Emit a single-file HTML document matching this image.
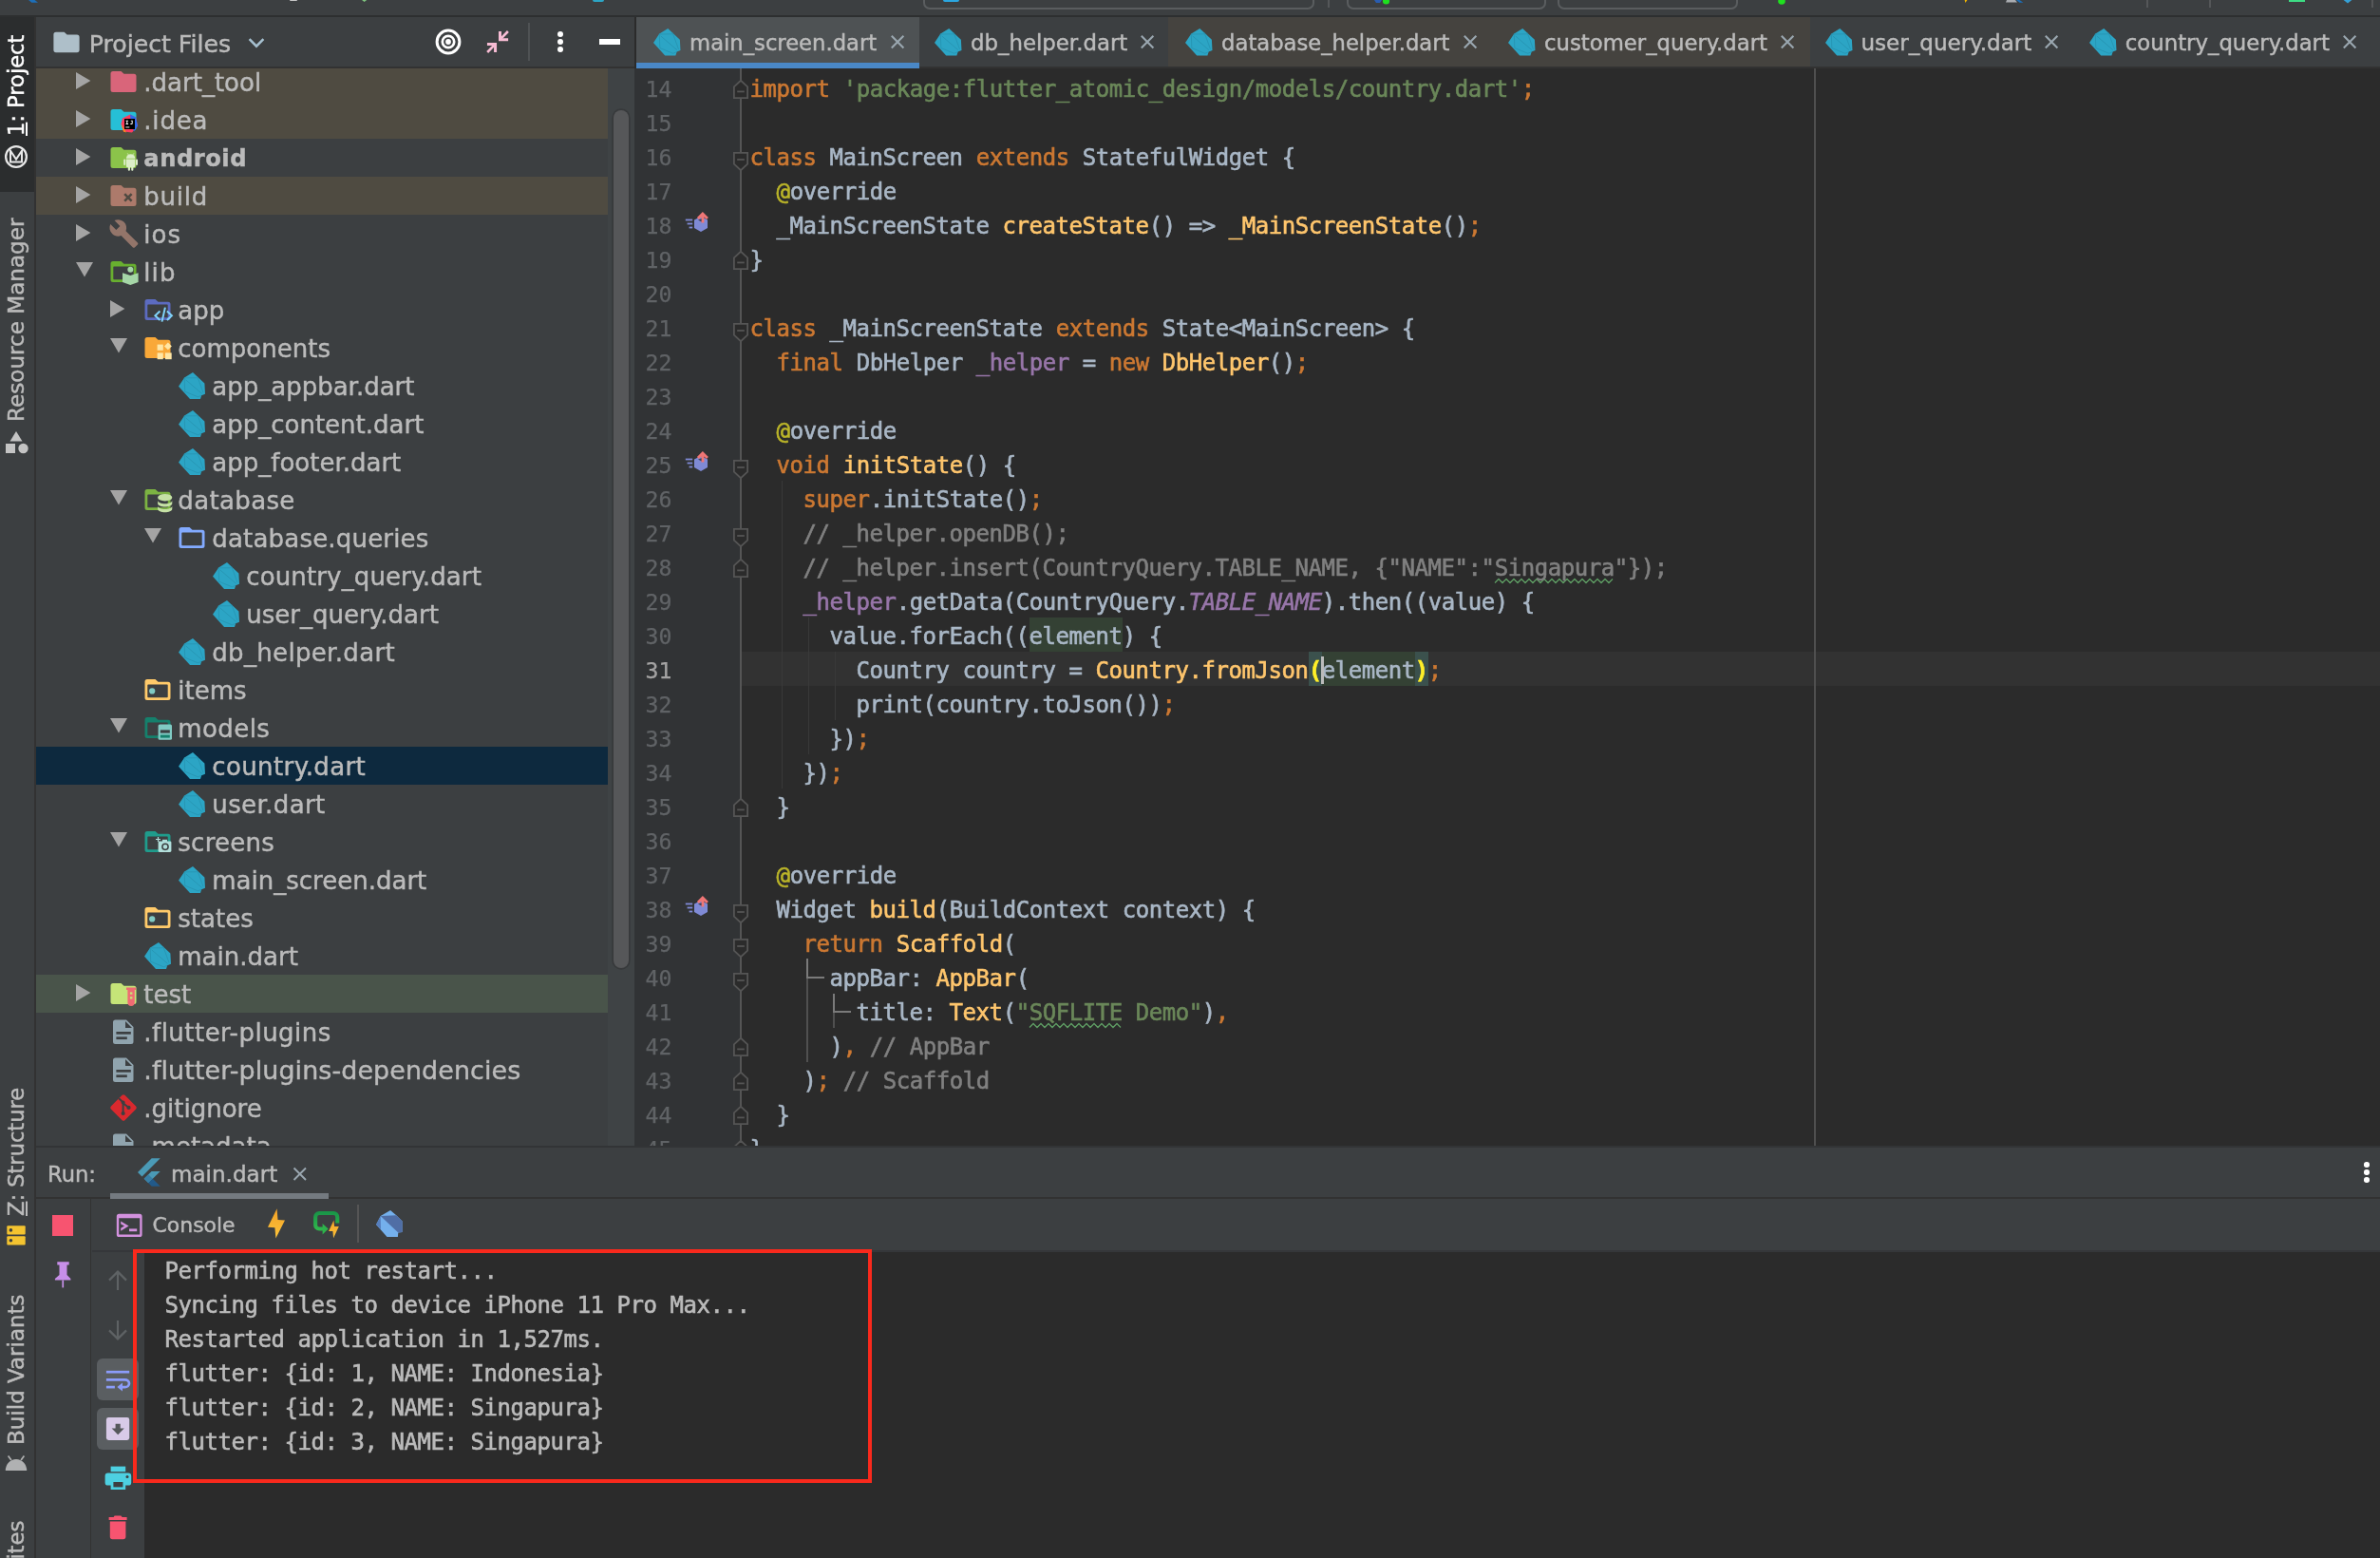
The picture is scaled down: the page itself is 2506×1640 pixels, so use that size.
<!DOCTYPE html><html><head><meta charset="utf-8"><title>main_screen.dart</title><style>
html,body{margin:0;padding:0;}
body{width:2506px;height:1640px;background:#3c3f41;position:relative;overflow:hidden;font-family:"DejaVu Sans","Liberation Sans",sans-serif;color:#bbb;-webkit-text-stroke:0.45px;}
.code,.con{-webkit-text-stroke:0.6px;}
.ln{-webkit-text-stroke:0.25px;}
div,svg,span.ab{position:absolute;box-sizing:border-box;}
.t{white-space:pre;font-size:26px;line-height:40px;height:40px;color:#bbbbbb;}
.code{white-space:pre;font-family:"DejaVu Sans Mono","Liberation Mono",monospace;font-size:24px;letter-spacing:-0.449px;line-height:36px;height:36px;color:#a9b7c6;}
.ln{font-family:"DejaVu Sans Mono","Liberation Mono",monospace;font-size:23.2px;letter-spacing:0.03px;line-height:36px;height:36px;color:#606366;white-space:pre;}
.k{color:#cc7832} .s{color:#6a8759} .f{color:#ffc66d} .a{color:#bbb529} .c{color:#808080} .p{color:#9876aa} .pi{color:#9876aa;font-style:italic}
.hl{background:#344134;padding:6.1px 0 2.1px} .br{background:#3b514d;color:#ffef28;font-weight:bold;padding:6.1px 0 2.1px}
.wv{}
.con{white-space:pre;font-family:"DejaVu Sans Mono","Liberation Mono",monospace;font-size:24px;letter-spacing:-0.449px;line-height:36px;height:36px;color:#bbbbbb;}
.tab{white-space:pre;font-size:22.6px;line-height:48px;height:48px;color:#bbbbbb;}
.vt{white-space:pre;font-size:22.8px;line-height:28px;height:28px;transform-origin:0 0;transform:rotate(-90deg);color:#bbbbbb;}
</style></head><body><div id="root" style="left:0;top:0;width:2506px;height:1640px;will-change:transform">
<div style="left:0px;top:0px;width:2506px;height:16px;background:#3c3f41"></div>
<div style="left:0px;top:16px;width:2506px;height:2px;background:#2d2f30"></div>
<div style="left:972px;top:-20px;width:412px;height:30px;border:2px solid #5a5d5f;border-radius:7px"></div>
<div style="left:1418px;top:-20px;width:210px;height:30px;border:2px solid #5a5d5f;border-radius:7px"></div>
<div style="left:1640px;top:-20px;width:190px;height:30px;border:2px solid #5a5d5f;border-radius:7px"></div>
<div style="left:1398px;top:0px;width:2px;height:8px;background:#555759"></div>
<div style="left:2260px;top:0px;width:2px;height:8px;background:#555759"></div>
<div style="left:2326px;top:0px;width:2px;height:8px;background:#555759"></div>
<div style="left:2496.5px;top:0px;width:2px;height:8px;background:#555759"></div>
<svg style="left:28px;top:0px;overflow:visible;" width="16" height="4" viewBox="0 0 16 4"><path d="M2,0 L5.4,2.8 L12,2.8 L8.6,0 Z" fill="#1d6fb8"/></svg>
<div style="left:305px;top:0px;width:8px;height:1.2px;background:#c8c8c8;border-radius:0 0 2px 2px"></div>
<svg style="left:379px;top:0px;overflow:visible;" width="10" height="4" viewBox="0 0 10 4"><path d="M2,0 L4.6,2 L7.2,0 Z" fill="#7fc47f"/></svg>
<div style="left:623.5px;top:0px;width:12px;height:1.8px;background:#2ca5c5;border-radius:0 0 2px 2px"></div>
<div style="left:993px;top:0px;width:17px;height:1.7px;background:#2ba6e0;border-radius:0 0 3px 3px"></div>
<svg style="left:1447px;top:0px;overflow:visible;" width="20" height="6" viewBox="0 0 20 6"><path d="M0,0 h8 l-2,3 h-4 z" fill="#2a5db0"/><circle cx="12.5" cy="1" r="3.6" fill="#1fe01f"/></svg>
<svg style="left:1869px;top:0px;overflow:visible;" width="12" height="6" viewBox="0 0 12 6"><circle cx="7" cy="1" r="3.8" fill="#1fe01f"/></svg>
<svg style="left:2066px;top:0px;overflow:visible;" width="10" height="4" viewBox="0 0 10 4"><path d="M2.6,0 L5.4,0 L3.4,3 Z" fill="#f0b400"/></svg>
<svg style="left:2110px;top:0px;overflow:visible;" width="24" height="5" viewBox="0 0 24 5"><path d="M3,0 h9 l2,2.6 h-12 z" fill="#a9acb0"/><path d="M13,0 h3.4 l4,2.8 h-4 z" fill="#1d6fb8"/></svg>
<div style="left:2410px;top:0px;width:17px;height:2.4px;background:#3ddc84"></div>
<svg style="left:2465px;top:0px;overflow:visible;" width="14" height="5" viewBox="0 0 14 5"><path d="M2.6,0 L7,3.4 L11.4,0 Z" fill="#35a0d6"/></svg>
<div style="left:0px;top:18px;width:36px;height:1622px;background:#3c3f41"></div>
<div style="left:36px;top:18px;width:2px;height:1622px;background:#323232"></div>
<div style="left:0px;top:18px;width:36px;height:184px;background:#2b2d2e"></div>
<div class="vt" style="left:2.5px;top:143.2px;color:#ffffff;font-size:22.55px"><span style="text-decoration:underline;text-underline-offset:1.5px">1</span>: Project</div>
<div class="vt" style="left:2.5px;top:443.5px;color:#bbbbbb;font-size:23.1px">Resource Manager</div>
<div class="vt" style="left:2.5px;top:1279.6px;color:#bbbbbb;font-size:22.55px"><span style="text-decoration:underline;text-underline-offset:1.5px">Z</span>: Structure</div>
<div class="vt" style="left:2.5px;top:1520.6px;color:#bbbbbb;font-size:23.0px">Build Variants</div>
<div class="vt" style="left:2.5px;top:1733px;color:#bbbbbb;font-size:22.8px">2: Favorites</div>
<svg style="left:4px;top:152px;overflow:visible;" width="26" height="26" viewBox="0 0 26 26"><circle cx="13" cy="13" r="10.9" fill="none" stroke="#e8e8e8" stroke-width="2.3"/><path d="M7,18.2 V6.8 L13,15.6 L19,6.8 V18.2 M6,18.6 H20" fill="none" stroke="#e8e8e8" stroke-width="2"/></svg>
<svg style="left:5px;top:453px;overflow:visible;" width="26" height="25" viewBox="0 0 26 25"><path d="M12,1 L18.5,11.5 H5.5 Z" fill="#c4c4c4"/><rect x="1" y="14" width="10" height="10" fill="#c4c4c4"/><circle cx="19.5" cy="19" r="5.2" fill="#c4c4c4"/></svg>
<svg style="left:7px;top:1289.6px;overflow:visible;" width="20" height="21" viewBox="0 0 20 21"><rect x="0.3" y="0.3" width="19.4" height="9.2" rx="1" fill="#f4c430"/><rect x="0.3" y="11.2" width="19.4" height="9.2" rx="1" fill="#f4c430"/><circle cx="4.4" cy="4.9" r="1.8" fill="#3c3f41"/><circle cx="4.4" cy="15.8" r="1.8" fill="#3c3f41"/></svg>
<svg style="left:4px;top:1530px;overflow:visible;" width="26" height="20" viewBox="0 0 26 20"><path d="M1.8,18 a11.2,12 0 0 1 22.4,0 z" fill="#b0b1b2"/><path d="M7.9,7 L4.6,2.4 M18.1,7 L21.4,2.4" stroke="#b0b1b2" stroke-width="1.7"/></svg>
<div style="left:38px;top:18px;width:630px;height:52px;background:#3c3f41"></div>
<div style="left:38px;top:70px;width:630px;height:2px;background:#323232"></div>
<svg style="left:56px;top:33px;overflow:visible;" width="29" height="23" viewBox="0 0 29 23"><path fill="#aebfc9" d="M3,0.8 h8.6 l3,2.8 h10.4 a2.6,2.6 0 0 1 2.6,2.6 v13.4 a2.6,2.6 0 0 1 -2.6,2.6 h-22 a2.6,2.6 0 0 1 -2.6,-2.6 v-16.2 a2.6,2.6 0 0 1 2.6,-2.6 z"/></svg>
<div class="t" style="left:93.7px;top:25px;font-size:25.2px;line-height:44px;height:44px">Project Files</div>
<svg style="left:260px;top:38px;overflow:visible;" width="20" height="14" viewBox="0 0 20 14"><path d="M2.6,3.2 L10,10.6 L17.4,3.2" fill="none" stroke="#a6c0d0" stroke-width="2.6"/></svg>
<svg style="left:457px;top:29px;overflow:visible;" width="30" height="30" viewBox="0 0 30 30"><circle cx="15" cy="15" r="11.9" fill="none" stroke="#fff" stroke-width="3"/><circle cx="15" cy="15" r="6.2" fill="none" stroke="#fff" stroke-width="2.7"/><circle cx="15" cy="15" r="2.9" fill="#fff"/></svg>
<svg style="left:510px;top:31px;overflow:visible;" width="28" height="28" viewBox="0 0 28 28"><g fill="none" stroke="#f7bcd4" stroke-width="3"><path d="M16.5,1.9 V10.65 H25.1"/><path d="M2.95,15.5 H11.55 V24"/></g><g fill="none" stroke="#f7bcd4" stroke-width="2.6"><path d="M24.9,2 L16.8,10.4"/><path d="M11.3,15.7 L3.2,24"/></g></svg>
<div style="left:556px;top:24px;width:2px;height:40px;background:#4f5254"></div>
<div style="left:586.6px;top:32.75px;width:6.3px;height:6.3px;background:#fff;border-radius:50%"></div>
<div style="left:586.6px;top:40.9px;width:6.3px;height:6.3px;background:#fff;border-radius:50%"></div>
<div style="left:586.6px;top:49.1px;width:6.3px;height:6.3px;background:#fff;border-radius:50%"></div>
<div style="left:631px;top:41px;width:22px;height:6px;background:#fff"></div>
<div style="left:38px;top:72px;width:630px;height:1134px;overflow:hidden">
<div style="left:0px;top:-6px;width:602px;height:40px;background:#4f4b41"></div>
<svg style="left:42px;top:4px;overflow:visible;" width="17" height="18" viewBox="0 0 17 18"><polygon points="0,0 15.4,9 0,18" fill="#a4a4a4"/></svg>
<svg style="left:78px;top:0px;overflow:visible;" width="30" height="29" viewBox="0 0 30 29"><path fill="#d9657a" d="M3,3 h8.5 l3,2.8 h10.5 a2.5,2.5 0 0 1 2.5,2.5 v14.2 a2.5,2.5 0 0 1 -2.5,2.5 h-22 a2.5,2.5 0 0 1 -2.5,-2.5 v-17 a2.5,2.5 0 0 1 2.5,-2.5 z"/></svg>
<div class="t" style="left:113.30000000000001px;top:-4.6px;">.dart_tool</div>
<div style="left:0px;top:34px;width:602px;height:40px;background:#4f4b41"></div>
<svg style="left:42px;top:44px;overflow:visible;" width="17" height="18" viewBox="0 0 17 18"><polygon points="0,0 15.4,9 0,18" fill="#a4a4a4"/></svg>
<svg style="left:78px;top:40px;overflow:visible;" width="30" height="29" viewBox="0 0 30 29"><path fill="#26bfd6" d="M3,3 h8.5 l3,2.8 h10.5 a2.5,2.5 0 0 1 2.5,2.5 v14.2 a2.5,2.5 0 0 1 -2.5,2.5 h-22 a2.5,2.5 0 0 1 -2.5,-2.5 v-17 a2.5,2.5 0 0 1 2.5,-2.5 z"/><g transform="translate(1,0.5)"><path d="M12,12 L20,8 L26,11 L28,20 L22,27 L13,26 L10.5,18 Z" fill="#fc3c5f"/><path d="M20,8 L26,11 L28,20 L24,26 L21,18 Z" fill="#2f6bf0"/><path d="M10.5,18 L13,26 L16,27 L12,20 Z" fill="#f78c1f"/><rect x="14" y="12.5" width="11" height="11" fill="#000"/><rect x="15.3" y="21" width="4" height="0.9" fill="#fff"/><path d="M15.5,14.2 h2.6 v0.8 h-0.8 v2.6 h0.8 v0.8 h-2.6 v-0.8 h0.8 v-2.6 h-0.8 z M20.8,14.2 h1.9 v3 c0,1 -0.6,1.3 -1.4,1.3 c-0.7,0 -1.1,-0.3 -1.4,-0.7 l0.6,-0.6 c0.2,0.3 0.4,0.4 0.7,0.4 c0.3,0 0.5,-0.2 0.5,-0.6 v-2 h-0.9 z" fill="#fff"/></g></svg>
<div class="t" style="left:113.30000000000001px;top:35.4px;letter-spacing:0.800px;">.idea</div>
<svg style="left:42px;top:84px;overflow:visible;" width="17" height="18" viewBox="0 0 17 18"><polygon points="0,0 15.4,9 0,18" fill="#a4a4a4"/></svg>
<svg style="left:78px;top:80px;overflow:visible;" width="30" height="29" viewBox="0 0 30 29"><path fill="#8bc34a" d="M3,3 h8.5 l3,2.8 h10.5 a2.5,2.5 0 0 1 2.5,2.5 v14.2 a2.5,2.5 0 0 1 -2.5,2.5 h-22 a2.5,2.5 0 0 1 -2.5,-2.5 v-17 a2.5,2.5 0 0 1 2.5,-2.5 z"/><g fill="#dcedc8" transform="translate(1.6,0)"><path d="M15.3,15.5 h9.4 v7.6 a1,1 0 0 1 -1,1 h-0.9 v2.6 a1.1,1.1 0 0 1 -2.2,0 v-2.6 h-1.2 v2.6 a1.1,1.1 0 0 1 -2.2,0 v-2.6 h-0.9 a1,1 0 0 1 -1,-1 z"/><path d="M15.3,14.7 a4.7,4.4 0 0 1 9.4,0 z"/><rect x="12.6" y="15.5" width="2" height="6.6" rx="1"/><rect x="25.4" y="15.5" width="2" height="6.6" rx="1"/><path d="M16.6,9.3 l1.2,1.8 M23.4,9.3 l-1.2,1.8" stroke="#dcedc8" stroke-width="0.7"/></g></svg>
<div class="t" style="left:113.30000000000001px;top:75.4px;font-weight:bold;font-size:24.2px;letter-spacing:0.533px;">android</div>
<div style="left:0px;top:114px;width:602px;height:40px;background:#4f4b41"></div>
<svg style="left:42px;top:124px;overflow:visible;" width="17" height="18" viewBox="0 0 17 18"><polygon points="0,0 15.4,9 0,18" fill="#a4a4a4"/></svg>
<svg style="left:78px;top:120px;overflow:visible;" width="30" height="29" viewBox="0 0 30 29"><path fill="#ad7a6b" d="M3,3 h8.5 l3,2.8 h10.5 a2.5,2.5 0 0 1 2.5,2.5 v14.2 a2.5,2.5 0 0 1 -2.5,2.5 h-22 a2.5,2.5 0 0 1 -2.5,-2.5 v-17 a2.5,2.5 0 0 1 2.5,-2.5 z"/><path d="M15.2,12.2 L22.6,19.6 M22.6,12.2 L15.2,19.6" stroke="#4f4a41" stroke-width="2.6" fill="none"/></svg>
<div class="t" style="left:113.30000000000001px;top:115.4px;letter-spacing:0.775px;">build</div>
<svg style="left:42px;top:164px;overflow:visible;" width="17" height="18" viewBox="0 0 17 18"><polygon points="0,0 15.4,9 0,18" fill="#a4a4a4"/></svg>
<svg style="left:78px;top:160px;overflow:visible;" width="30" height="29" viewBox="0 0 30 29"><g fill="#93756a" transform="translate(0.4,-1.1) scale(1.06)"><path d="M26.9,23.3 L15.2,11.6 C16.4,8.6 15.8,5.1 13.4,2.7 C10.8,0.1 7,-0.4 3.9,1 L9.4,6.6 L5.6,10.4 L-0.1,4.9 C-1.6,8 -1,11.8 1.6,14.3 C4,16.7 7.5,17.3 10.5,16.2 L22.2,27.9 C22.7,28.4 23.5,28.4 24,27.9 L26.9,25 C27.5,24.6 27.5,23.7 26.9,23.3 Z"/></g></svg>
<div class="t" style="left:113.30000000000001px;top:155.4px;letter-spacing:1.050px;">ios</div>
<svg style="left:42px;top:204px;overflow:visible;" width="18" height="16" viewBox="0 0 18 16"><polygon points="0,0 18,0 9,15.6" fill="#a4a4a4"/></svg>
<svg style="left:78px;top:200px;overflow:visible;" width="30" height="29" viewBox="0 0 30 29"><path fill-rule="evenodd" fill="#68af2f" d="M3,3 h8.5 l3,2.8 h10.5 a2.5,2.5 0 0 1 2.5,2.5 v14.2 a2.5,2.5 0 0 1 -2.5,2.5 h-22 a2.5,2.5 0 0 1 -2.5,-2.5 v-17 a2.5,2.5 0 0 1 2.5,-2.5 z M4,8.6 h20 a0.7,0.7 0 0 1 0.7,0.7 v12.2 a0.7,0.7 0 0 1 -0.7,0.7 h-20 a0.7,0.7 0 0 1 -0.7,-0.7 v-12.2 a0.7,0.7 0 0 1 0.7,-0.7 z"/><g><circle cx="21.3" cy="11.8" r="3" fill="#a5d6a7"/><path d="M13,15.2 L21.3,17.9 L29.6,15.2 V25 L21.3,28 L13,25 Z" fill="#a5d6a7"/></g></svg>
<div class="t" style="left:113.30000000000001px;top:195.4px;letter-spacing:1.100px;">lib</div>
<svg style="left:78px;top:244px;overflow:visible;" width="17" height="18" viewBox="0 0 17 18"><polygon points="0,0 15.4,9 0,18" fill="#a4a4a4"/></svg>
<svg style="left:114px;top:240px;overflow:visible;" width="30" height="29" viewBox="0 0 30 29"><path fill-rule="evenodd" fill="#5c6bc0" d="M3,3 h8.5 l3,2.8 h10.5 a2.5,2.5 0 0 1 2.5,2.5 v14.2 a2.5,2.5 0 0 1 -2.5,2.5 h-22 a2.5,2.5 0 0 1 -2.5,-2.5 v-17 a2.5,2.5 0 0 1 2.5,-2.5 z M4,8.6 h20 a0.7,0.7 0 0 1 0.7,0.7 v12.2 a0.7,0.7 0 0 1 -0.7,0.7 h-20 a0.7,0.7 0 0 1 -0.7,-0.7 v-12.2 a0.7,0.7 0 0 1 0.7,-0.7 z"/><g fill="none" stroke="#81d4fa" stroke-width="2"><path d="M16.4,15.6 L11.4,20.3 L16.4,25"/><path d="M23.9,15.6 L28.9,20.3 L23.9,25"/><path d="M21.9,11.6 L18.5,26.6"/></g></svg>
<div class="t" style="left:149.3px;top:235.4px;">app</div>
<svg style="left:78px;top:284px;overflow:visible;" width="18" height="16" viewBox="0 0 18 16"><polygon points="0,0 18,0 9,15.6" fill="#a4a4a4"/></svg>
<svg style="left:114px;top:280px;overflow:visible;" width="30" height="29" viewBox="0 0 30 29"><path fill="#f9a838" d="M3,3 h8.5 l3,2.8 h10.5 a2.5,2.5 0 0 1 2.5,2.5 v14.2 a2.5,2.5 0 0 1 -2.5,2.5 h-22 a2.5,2.5 0 0 1 -2.5,-2.5 v-17 a2.5,2.5 0 0 1 2.5,-2.5 z"/><g fill="#ffe6a5" transform="translate(0.6,2)"><rect x="13" y="8.6" width="6.2" height="6.2"/><rect x="13" y="17.4" width="6.2" height="6.8"/><rect x="21.3" y="17.4" width="6.8" height="6.8"/><rect x="21.5" y="7.6" width="5.6" height="5.6" transform="rotate(45 24.3 10.4)"/></g></svg>
<div class="t" style="left:149.3px;top:275.4px;">components</div>
<svg style="left:150px;top:320px;overflow:visible;" width="30" height="29" viewBox="0 0 30 29"><polygon fill="#2ca5c5" points="15,0 27.4,11.5 28,22.7 24.2,24.2 23,28 12,28 0,14.8 6.2,5.5"/><path fill="none" stroke="#2590ad" stroke-width="0.7" d="M6.2,5.5 L6.7,20.2 L20.4,25.8 L24.2,24.2 M7.6,7.8 L24.5,22.3 M19.6,4.2 L22,10.2 L26,21.3 M6.2,5.9 L19.6,5.7"/></svg>
<div class="t" style="left:185.3px;top:315.4px;">app_appbar.dart</div>
<svg style="left:150px;top:360px;overflow:visible;" width="30" height="29" viewBox="0 0 30 29"><polygon fill="#2ca5c5" points="15,0 27.4,11.5 28,22.7 24.2,24.2 23,28 12,28 0,14.8 6.2,5.5"/><path fill="none" stroke="#2590ad" stroke-width="0.7" d="M6.2,5.5 L6.7,20.2 L20.4,25.8 L24.2,24.2 M7.6,7.8 L24.5,22.3 M19.6,4.2 L22,10.2 L26,21.3 M6.2,5.9 L19.6,5.7"/></svg>
<div class="t" style="left:185.3px;top:355.4px;">app_content.dart</div>
<svg style="left:150px;top:400px;overflow:visible;" width="30" height="29" viewBox="0 0 30 29"><polygon fill="#2ca5c5" points="15,0 27.4,11.5 28,22.7 24.2,24.2 23,28 12,28 0,14.8 6.2,5.5"/><path fill="none" stroke="#2590ad" stroke-width="0.7" d="M6.2,5.5 L6.7,20.2 L20.4,25.8 L24.2,24.2 M7.6,7.8 L24.5,22.3 M19.6,4.2 L22,10.2 L26,21.3 M6.2,5.9 L19.6,5.7"/></svg>
<div class="t" style="left:185.3px;top:395.4px;">app_footer.dart</div>
<svg style="left:78px;top:444px;overflow:visible;" width="18" height="16" viewBox="0 0 18 16"><polygon points="0,0 18,0 9,15.6" fill="#a4a4a4"/></svg>
<svg style="left:114px;top:440px;overflow:visible;" width="30" height="29" viewBox="0 0 30 29"><path fill-rule="evenodd" fill="#7cb342" d="M3,3 h8.5 l3,2.8 h10.5 a2.5,2.5 0 0 1 2.5,2.5 v14.2 a2.5,2.5 0 0 1 -2.5,2.5 h-22 a2.5,2.5 0 0 1 -2.5,-2.5 v-17 a2.5,2.5 0 0 1 2.5,-2.5 z M4,8.6 h20 a0.7,0.7 0 0 1 0.7,0.7 v12.2 a0.7,0.7 0 0 1 -0.7,0.7 h-20 a0.7,0.7 0 0 1 -0.7,-0.7 v-12.2 a0.7,0.7 0 0 1 0.7,-0.7 z"/><g fill="#c5e1a5" transform="translate(0.7,0.2)"><ellipse cx="21" cy="11.5" rx="7.6" ry="3.7"/><path d="M13.4,14.3 c0,5 15.2,5 15.2,0 v3.2 c0,5 -15.2,5 -15.2,0 z"/><path d="M13.4,20 c0,5 15.2,5 15.2,0 v3.2 c0,5 -15.2,5 -15.2,0 z"/></g></svg>
<div class="t" style="left:149.3px;top:435.4px;letter-spacing:0.357px;">database</div>
<svg style="left:114px;top:484px;overflow:visible;" width="18" height="16" viewBox="0 0 18 16"><polygon points="0,0 18,0 9,15.6" fill="#a4a4a4"/></svg>
<svg style="left:150px;top:480px;overflow:visible;" width="30" height="29" viewBox="0 0 30 29"><path fill-rule="evenodd" fill="#82aaff" d="M3,3 h8.5 l3,2.8 h10.5 a2.5,2.5 0 0 1 2.5,2.5 v14.2 a2.5,2.5 0 0 1 -2.5,2.5 h-22 a2.5,2.5 0 0 1 -2.5,-2.5 v-17 a2.5,2.5 0 0 1 2.5,-2.5 z M4,8.6 h20 a0.7,0.7 0 0 1 0.7,0.7 v12.2 a0.7,0.7 0 0 1 -0.7,0.7 h-20 a0.7,0.7 0 0 1 -0.7,-0.7 v-12.2 a0.7,0.7 0 0 1 0.7,-0.7 z"/></svg>
<div class="t" style="left:185.3px;top:475.4px;letter-spacing:0.187px;">database.queries</div>
<svg style="left:186px;top:520px;overflow:visible;" width="30" height="29" viewBox="0 0 30 29"><polygon fill="#2ca5c5" points="15,0 27.4,11.5 28,22.7 24.2,24.2 23,28 12,28 0,14.8 6.2,5.5"/><path fill="none" stroke="#2590ad" stroke-width="0.7" d="M6.2,5.5 L6.7,20.2 L20.4,25.8 L24.2,24.2 M7.6,7.8 L24.5,22.3 M19.6,4.2 L22,10.2 L26,21.3 M6.2,5.9 L19.6,5.7"/></svg>
<div class="t" style="left:221.3px;top:515.4px;letter-spacing:0.129px;">country_query.dart</div>
<svg style="left:186px;top:560px;overflow:visible;" width="30" height="29" viewBox="0 0 30 29"><polygon fill="#2ca5c5" points="15,0 27.4,11.5 28,22.7 24.2,24.2 23,28 12,28 0,14.8 6.2,5.5"/><path fill="none" stroke="#2590ad" stroke-width="0.7" d="M6.2,5.5 L6.7,20.2 L20.4,25.8 L24.2,24.2 M7.6,7.8 L24.5,22.3 M19.6,4.2 L22,10.2 L26,21.3 M6.2,5.9 L19.6,5.7"/></svg>
<div class="t" style="left:221.3px;top:555.4px;">user_query.dart</div>
<svg style="left:150px;top:600px;overflow:visible;" width="30" height="29" viewBox="0 0 30 29"><polygon fill="#2ca5c5" points="15,0 27.4,11.5 28,22.7 24.2,24.2 23,28 12,28 0,14.8 6.2,5.5"/><path fill="none" stroke="#2590ad" stroke-width="0.7" d="M6.2,5.5 L6.7,20.2 L20.4,25.8 L24.2,24.2 M7.6,7.8 L24.5,22.3 M19.6,4.2 L22,10.2 L26,21.3 M6.2,5.9 L19.6,5.7"/></svg>
<div class="t" style="left:185.3px;top:595.4px;letter-spacing:0.323px;">db_helper.dart</div>
<svg style="left:114px;top:640px;overflow:visible;" width="30" height="29" viewBox="0 0 30 29"><path fill-rule="evenodd" fill="#ffca6a" d="M3,3 h8.5 l3,2.8 h10.5 a2.5,2.5 0 0 1 2.5,2.5 v14.2 a2.5,2.5 0 0 1 -2.5,2.5 h-22 a2.5,2.5 0 0 1 -2.5,-2.5 v-17 a2.5,2.5 0 0 1 2.5,-2.5 z M4,8.6 h20 a0.7,0.7 0 0 1 0.7,0.7 v12.2 a0.7,0.7 0 0 1 -0.7,0.7 h-20 a0.7,0.7 0 0 1 -0.7,-0.7 v-12.2 a0.7,0.7 0 0 1 0.7,-0.7 z"/><circle cx="8.2" cy="15.4" r="3.1" fill="#80cbc4"/></svg>
<div class="t" style="left:149.3px;top:635.4px;">items</div>
<svg style="left:78px;top:684px;overflow:visible;" width="18" height="16" viewBox="0 0 18 16"><polygon points="0,0 18,0 9,15.6" fill="#a4a4a4"/></svg>
<svg style="left:114px;top:680px;overflow:visible;" width="30" height="29" viewBox="0 0 30 29"><path fill-rule="evenodd" fill="#15806c" d="M3,3 h8.5 l3,2.8 h10.5 a2.5,2.5 0 0 1 2.5,2.5 v14.2 a2.5,2.5 0 0 1 -2.5,2.5 h-22 a2.5,2.5 0 0 1 -2.5,-2.5 v-17 a2.5,2.5 0 0 1 2.5,-2.5 z M4,8.6 h20 a0.7,0.7 0 0 1 0.7,0.7 v12.2 a0.7,0.7 0 0 1 -0.7,0.7 h-20 a0.7,0.7 0 0 1 -0.7,-0.7 v-12.2 a0.7,0.7 0 0 1 0.7,-0.7 z"/><g><rect x="14.6" y="10.4" width="14.4" height="16.4" rx="1.6" fill="#80cbc4"/><rect x="16.8" y="16.4" width="10" height="3.2" fill="#3c3f41"/><rect x="16.8" y="21.6" width="10" height="3" fill="#15806c"/></g></svg>
<div class="t" style="left:149.3px;top:675.4px;letter-spacing:0.400px;">models</div>
<div style="left:0px;top:714px;width:602px;height:40px;background:#0d293e"></div>
<svg style="left:150px;top:720px;overflow:visible;" width="30" height="29" viewBox="0 0 30 29"><polygon fill="#2ca5c5" points="15,0 27.4,11.5 28,22.7 24.2,24.2 23,28 12,28 0,14.8 6.2,5.5"/><path fill="none" stroke="#2590ad" stroke-width="0.7" d="M6.2,5.5 L6.7,20.2 L20.4,25.8 L24.2,24.2 M7.6,7.8 L24.5,22.3 M19.6,4.2 L22,10.2 L26,21.3 M6.2,5.9 L19.6,5.7"/></svg>
<div class="t" style="left:185.3px;top:715.4px;letter-spacing:0.382px;">country.dart</div>
<svg style="left:150px;top:760px;overflow:visible;" width="30" height="29" viewBox="0 0 30 29"><polygon fill="#2ca5c5" points="15,0 27.4,11.5 28,22.7 24.2,24.2 23,28 12,28 0,14.8 6.2,5.5"/><path fill="none" stroke="#2590ad" stroke-width="0.7" d="M6.2,5.5 L6.7,20.2 L20.4,25.8 L24.2,24.2 M7.6,7.8 L24.5,22.3 M19.6,4.2 L22,10.2 L26,21.3 M6.2,5.9 L19.6,5.7"/></svg>
<div class="t" style="left:185.3px;top:755.4px;letter-spacing:0.375px;">user.dart</div>
<svg style="left:78px;top:804px;overflow:visible;" width="18" height="16" viewBox="0 0 18 16"><polygon points="0,0 18,0 9,15.6" fill="#a4a4a4"/></svg>
<svg style="left:114px;top:800px;overflow:visible;" width="30" height="29" viewBox="0 0 30 29"><path fill-rule="evenodd" fill="#1f9c8c" d="M3,3 h8.5 l3,2.8 h10.5 a2.5,2.5 0 0 1 2.5,2.5 v14.2 a2.5,2.5 0 0 1 -2.5,2.5 h-22 a2.5,2.5 0 0 1 -2.5,-2.5 v-17 a2.5,2.5 0 0 1 2.5,-2.5 z M4,8.6 h20 a0.7,0.7 0 0 1 0.7,0.7 v12.2 a0.7,0.7 0 0 1 -0.7,0.7 h-20 a0.7,0.7 0 0 1 -0.7,-0.7 v-12.2 a0.7,0.7 0 0 1 0.7,-0.7 z"/><g><rect x="14.6" y="13.4" width="13.8" height="11.6" rx="1.4" fill="#b2dfdb"/><rect x="19" y="11.8" width="5" height="2.4" fill="#b2dfdb"/><circle cx="22" cy="19.3" r="3.1" fill="none" stroke="#3c3f41" stroke-width="1.5"/><path d="M14.5,9 v5 M12,11.5 h5" stroke="#b2dfdb" stroke-width="1.2"/></g></svg>
<div class="t" style="left:149.3px;top:795.4px;letter-spacing:0.250px;">screens</div>
<svg style="left:150px;top:840px;overflow:visible;" width="30" height="29" viewBox="0 0 30 29"><polygon fill="#2ca5c5" points="15,0 27.4,11.5 28,22.7 24.2,24.2 23,28 12,28 0,14.8 6.2,5.5"/><path fill="none" stroke="#2590ad" stroke-width="0.7" d="M6.2,5.5 L6.7,20.2 L20.4,25.8 L24.2,24.2 M7.6,7.8 L24.5,22.3 M19.6,4.2 L22,10.2 L26,21.3 M6.2,5.9 L19.6,5.7"/></svg>
<div class="t" style="left:185.3px;top:835.4px;">main_screen.dart</div>
<svg style="left:114px;top:880px;overflow:visible;" width="30" height="29" viewBox="0 0 30 29"><path fill-rule="evenodd" fill="#ffca6a" d="M3,3 h8.5 l3,2.8 h10.5 a2.5,2.5 0 0 1 2.5,2.5 v14.2 a2.5,2.5 0 0 1 -2.5,2.5 h-22 a2.5,2.5 0 0 1 -2.5,-2.5 v-17 a2.5,2.5 0 0 1 2.5,-2.5 z M4,8.6 h20 a0.7,0.7 0 0 1 0.7,0.7 v12.2 a0.7,0.7 0 0 1 -0.7,0.7 h-20 a0.7,0.7 0 0 1 -0.7,-0.7 v-12.2 a0.7,0.7 0 0 1 0.7,-0.7 z"/><circle cx="8.2" cy="15.4" r="3.1" fill="#80cbc4"/></svg>
<div class="t" style="left:149.3px;top:875.4px;">states</div>
<svg style="left:114px;top:920px;overflow:visible;" width="30" height="29" viewBox="0 0 30 29"><polygon fill="#2ca5c5" points="15,0 27.4,11.5 28,22.7 24.2,24.2 23,28 12,28 0,14.8 6.2,5.5"/><path fill="none" stroke="#2590ad" stroke-width="0.7" d="M6.2,5.5 L6.7,20.2 L20.4,25.8 L24.2,24.2 M7.6,7.8 L24.5,22.3 M19.6,4.2 L22,10.2 L26,21.3 M6.2,5.9 L19.6,5.7"/></svg>
<div class="t" style="left:149.3px;top:915.4px;">main.dart</div>
<div style="left:0px;top:954px;width:602px;height:40px;background:#49544a"></div>
<svg style="left:42px;top:964px;overflow:visible;" width="17" height="18" viewBox="0 0 17 18"><polygon points="0,0 15.4,9 0,18" fill="#a4a4a4"/></svg>
<svg style="left:78px;top:960px;overflow:visible;" width="30" height="29" viewBox="0 0 30 29"><path fill="#c5e478" d="M3,3 h8.5 l3,2.8 h10.5 a2.5,2.5 0 0 1 2.5,2.5 v14.2 a2.5,2.5 0 0 1 -2.5,2.5 h-22 a2.5,2.5 0 0 1 -2.5,-2.5 v-17 a2.5,2.5 0 0 1 2.5,-2.5 z"/><g><path d="M17,7.6 h10.2 v2.4 h-1.4 v13.2 a3.7,3.7 0 0 1 -7.4,0 v-13.2 h-1.4 z" fill="#ef6b73"/><rect x="20.9" y="12.4" width="2.5" height="2.3" fill="#c5e478"/><rect x="20.9" y="17.2" width="2.5" height="2.3" fill="#c5e478"/></g></svg>
<div class="t" style="left:113.30000000000001px;top:955.4px;">test</div>
<svg style="left:78px;top:1000px;overflow:visible;" width="30" height="29" viewBox="0 0 30 29"><path fill="#90a4ae" d="M5.5,1.5 h11.5 l7.5,7.5 v15.5 a2.5,2.5 0 0 1 -2.5,2.5 h-16.5 a2.5,2.5 0 0 1 -2.5,-2.5 v-20.5 a2.5,2.5 0 0 1 2.5,-2.5 z"/><path fill="#3c3f41" d="M16,3 v7 h7 z"/><rect x="6.4" y="14" width="15.4" height="2.7" fill="#3c3f41"/><rect x="6.4" y="19.4" width="11.4" height="2.7" fill="#3c3f41"/></svg>
<div class="t" style="left:113.30000000000001px;top:995.4px;letter-spacing:0.473px;">.flutter-plugins</div>
<svg style="left:78px;top:1040px;overflow:visible;" width="30" height="29" viewBox="0 0 30 29"><path fill="#90a4ae" d="M5.5,1.5 h11.5 l7.5,7.5 v15.5 a2.5,2.5 0 0 1 -2.5,2.5 h-16.5 a2.5,2.5 0 0 1 -2.5,-2.5 v-20.5 a2.5,2.5 0 0 1 2.5,-2.5 z"/><path fill="#3c3f41" d="M16,3 v7 h7 z"/><rect x="6.4" y="14" width="15.4" height="2.7" fill="#3c3f41"/><rect x="6.4" y="19.4" width="11.4" height="2.7" fill="#3c3f41"/></svg>
<div class="t" style="left:113.30000000000001px;top:1035.4px;font-size:26.9px;letter-spacing:0.111px;">.flutter-plugins-dependencies</div>
<svg style="left:78px;top:1080px;overflow:visible;" width="30" height="29" viewBox="0 0 30 29"><rect x="3.7" y="3.7" width="20.6" height="20.6" rx="2" transform="rotate(45 14 14)" fill="#d9292e"/><g stroke="#3c3f41" stroke-width="2" fill="none"><path d="M9.2,4.2 L13.6,8.4 V20 M13.6,9.2 L19.5,13.8"/></g><circle cx="13.6" cy="8.4" r="2" fill="#3c3f41"/><circle cx="13.6" cy="20" r="2.1" fill="#3c3f41"/><circle cx="19.5" cy="13.9" r="2.1" fill="#3c3f41"/></svg>
<div class="t" style="left:113.30000000000001px;top:1075.4px;">.gitignore</div>
<svg style="left:78px;top:1120px;overflow:visible;" width="30" height="29" viewBox="0 0 30 29"><path fill="#90a4ae" d="M5.5,1.5 h11.5 l7.5,7.5 v15.5 a2.5,2.5 0 0 1 -2.5,2.5 h-16.5 a2.5,2.5 0 0 1 -2.5,-2.5 v-20.5 a2.5,2.5 0 0 1 2.5,-2.5 z"/><path fill="#3c3f41" d="M16,3 v7 h7 z"/><rect x="6.4" y="14" width="15.4" height="2.7" fill="#3c3f41"/><rect x="6.4" y="19.4" width="11.4" height="2.7" fill="#3c3f41"/></svg>
<div class="t" style="left:113.30000000000001px;top:1115.4px;">.metadata</div>
</div>
<div style="left:640px;top:72px;width:28px;height:1134px;background:#3f4345"></div>
<div style="left:646px;top:116px;width:16px;height:903px;background:#565759;border-radius:8px;box-shadow:0 0 0 1.7px #37393b"></div>
<div style="left:668px;top:18px;width:2px;height:54px;background:#2b2b2b"></div>
<div style="left:670px;top:18px;width:1836px;height:54px;background:#3c3f41"></div>
<div style="left:670px;top:18px;width:298px;height:54px;background:#4e5254"></div>
<svg style="left:688px;top:30px;overflow:visible;" width="29" height="29" viewBox="0 0 28.5 28.5"><polygon fill="#2ca5c5" points="15,0 27.4,11.5 28,22.7 24.2,24.2 23,28 12,28 0,14.8 6.2,5.5"/><path fill="none" stroke="#2590ad" stroke-width="0.7" d="M6.2,5.5 L6.7,20.2 L20.4,25.8 L24.2,24.2 M7.6,7.8 L24.5,22.3 M19.6,4.2 L22,10.2 L26,21.3 M6.2,5.9 L19.6,5.7"/></svg>
<div class="tab" style="left:726.1px;top:20.6px;font-size:22.68px">main_screen.dart</div>
<svg style="left:938px;top:37px;overflow:visible;" width="15" height="15" viewBox="0 0 15 15"><path d="M0.8,0.8 L13.4,13.4 M13.4,0.8 L0.8,13.4" stroke="#9aa7b0" stroke-width="2.1" fill="none"/></svg>
<svg style="left:983.5px;top:30px;overflow:visible;" width="29" height="29" viewBox="0 0 28.5 28.5"><polygon fill="#2ca5c5" points="15,0 27.4,11.5 28,22.7 24.2,24.2 23,28 12,28 0,14.8 6.2,5.5"/><path fill="none" stroke="#2590ad" stroke-width="0.7" d="M6.2,5.5 L6.7,20.2 L20.4,25.8 L24.2,24.2 M7.6,7.8 L24.5,22.3 M19.6,4.2 L22,10.2 L26,21.3 M6.2,5.9 L19.6,5.7"/></svg>
<div class="tab" style="left:1022.0px;top:20.6px;font-size:22.85px">db_helper.dart</div>
<svg style="left:1201px;top:37px;overflow:visible;" width="15" height="15" viewBox="0 0 15 15"><path d="M0.8,0.8 L13.4,13.4 M13.4,0.8 L0.8,13.4" stroke="#9aa7b0" stroke-width="2.1" fill="none"/></svg>
<div style="left:1230px;top:18px;width:340px;height:52px;background:#45433f"></div>
<svg style="left:1247.6px;top:30px;overflow:visible;" width="29" height="29" viewBox="0 0 28.5 28.5"><polygon fill="#2ca5c5" points="15,0 27.4,11.5 28,22.7 24.2,24.2 23,28 12,28 0,14.8 6.2,5.5"/><path fill="none" stroke="#2590ad" stroke-width="0.7" d="M6.2,5.5 L6.7,20.2 L20.4,25.8 L24.2,24.2 M7.6,7.8 L24.5,22.3 M19.6,4.2 L22,10.2 L26,21.3 M6.2,5.9 L19.6,5.7"/></svg>
<div class="tab" style="left:1286.1px;top:20.6px;font-size:22.68px">database_helper.dart</div>
<svg style="left:1541px;top:37px;overflow:visible;" width="15" height="15" viewBox="0 0 15 15"><path d="M0.8,0.8 L13.4,13.4 M13.4,0.8 L0.8,13.4" stroke="#9aa7b0" stroke-width="2.1" fill="none"/></svg>
<div style="left:1570px;top:18px;width:336px;height:52px;background:#45433f"></div>
<svg style="left:1588px;top:30px;overflow:visible;" width="29" height="29" viewBox="0 0 28.5 28.5"><polygon fill="#2ca5c5" points="15,0 27.4,11.5 28,22.7 24.2,24.2 23,28 12,28 0,14.8 6.2,5.5"/><path fill="none" stroke="#2590ad" stroke-width="0.7" d="M6.2,5.5 L6.7,20.2 L20.4,25.8 L24.2,24.2 M7.6,7.8 L24.5,22.3 M19.6,4.2 L22,10.2 L26,21.3 M6.2,5.9 L19.6,5.7"/></svg>
<div class="tab" style="left:1626.1px;top:20.6px;font-size:22.75px">customer_query.dart</div>
<svg style="left:1875px;top:37px;overflow:visible;" width="15" height="15" viewBox="0 0 15 15"><path d="M0.8,0.8 L13.4,13.4 M13.4,0.8 L0.8,13.4" stroke="#9aa7b0" stroke-width="2.1" fill="none"/></svg>
<svg style="left:1921.6px;top:30px;overflow:visible;" width="29" height="29" viewBox="0 0 28.5 28.5"><polygon fill="#2ca5c5" points="15,0 27.4,11.5 28,22.7 24.2,24.2 23,28 12,28 0,14.8 6.2,5.5"/><path fill="none" stroke="#2590ad" stroke-width="0.7" d="M6.2,5.5 L6.7,20.2 L20.4,25.8 L24.2,24.2 M7.6,7.8 L24.5,22.3 M19.6,4.2 L22,10.2 L26,21.3 M6.2,5.9 L19.6,5.7"/></svg>
<div class="tab" style="left:1959.3999999999999px;top:20.6px;font-size:23.1px">user_query.dart</div>
<svg style="left:2153px;top:37px;overflow:visible;" width="15" height="15" viewBox="0 0 15 15"><path d="M0.8,0.8 L13.4,13.4 M13.4,0.8 L0.8,13.4" stroke="#9aa7b0" stroke-width="2.1" fill="none"/></svg>
<svg style="left:2200px;top:30px;overflow:visible;" width="29" height="29" viewBox="0 0 28.5 28.5"><polygon fill="#2ca5c5" points="15,0 27.4,11.5 28,22.7 24.2,24.2 23,28 12,28 0,14.8 6.2,5.5"/><path fill="none" stroke="#2590ad" stroke-width="0.7" d="M6.2,5.5 L6.7,20.2 L20.4,25.8 L24.2,24.2 M7.6,7.8 L24.5,22.3 M19.6,4.2 L22,10.2 L26,21.3 M6.2,5.9 L19.6,5.7"/></svg>
<div class="tab" style="left:2237.7999999999997px;top:20.6px;font-size:22.8px">country_query.dart</div>
<svg style="left:2466.6px;top:37px;overflow:visible;" width="15" height="15" viewBox="0 0 15 15"><path d="M0.8,0.8 L13.4,13.4 M13.4,0.8 L0.8,13.4" stroke="#9aa7b0" stroke-width="2.1" fill="none"/></svg>
<div style="left:670px;top:70px;width:1836px;height:2px;background:#323232"></div>
<div style="left:670px;top:66px;width:298px;height:6px;background:#4a88c7"></div>
<div style="left:668px;top:72px;width:1838px;height:1134px;background:#2b2b2b"></div>
<div style="left:668px;top:72px;width:112px;height:1134px;background:#313335"></div>
<div style="left:0;top:72px;width:2506px;height:1134px;overflow:hidden">
<div style="left:781px;top:614px;width:1725px;height:36px;background:#323232"></div>
<div style="left:1910px;top:0px;width:2px;height:1134px;background:#4f4f4f"></div>
<div style="left:779.3px;top:0px;width:1.7px;height:1134px;background:#555555"></div>
<div style="left:822.5px;top:434px;width:1.5px;height:324px;background:#393939"></div>
<div style="left:850.6px;top:578px;width:1.5px;height:144px;background:#393939"></div>
<div style="left:878.8px;top:614px;width:1.5px;height:72px;background:#393939"></div>
<div style="left:849.3px;top:937px;width:1.8px;height:20.6px;background:#7a7a7a"></div>
<div style="left:849.3px;top:957.6px;width:1.8px;height:88.9px;background:#505050"></div>
<div style="left:849.3px;top:955.8px;width:18.5px;height:1.9px;background:#7a7a7a"></div>
<div style="left:877.4px;top:973.5px;width:1.8px;height:20.4px;background:#7a7a7a"></div>
<div style="left:877.4px;top:993.9px;width:1.8px;height:16.6px;background:#505050"></div>
<div style="left:877.4px;top:992.2px;width:18.3px;height:1.9px;background:#7a7a7a"></div>
<svg style="left:1573.6px;top:536.6px;overflow:visible;" width="127.0" height="5" viewBox="0 0 127.0 5"><polyline points="0.0,4.5 4.0,0.5 8.0,4.5 12.0,0.5 16.0,4.5 20.0,0.5 24.0,4.5 28.0,0.5 32.0,4.5 36.0,0.5 40.0,4.5 44.0,0.5 48.0,4.5 52.0,0.5 56.0,4.5 60.0,0.5 64.0,4.5 68.0,0.5 72.0,4.5 76.0,0.5 80.0,4.5 84.0,0.5 88.0,4.5 92.0,0.5 96.0,4.5 100.0,0.5 104.0,4.5 108.0,0.5 112.0,4.5 116.0,0.5 120.0,4.5 124.0,0.5" fill="none" stroke="#5f9e64" stroke-width="1.25"/></svg>
<svg style="left:1083.6px;top:1004.6px;overflow:visible;" width="99.0" height="5" viewBox="0 0 99.0 5"><polyline points="0.0,4.5 4.0,0.5 8.0,4.5 12.0,0.5 16.0,4.5 20.0,0.5 24.0,4.5 28.0,0.5 32.0,4.5 36.0,0.5 40.0,4.5 44.0,0.5 48.0,4.5 52.0,0.5 56.0,4.5 60.0,0.5 64.0,4.5 68.0,0.5 72.0,4.5 76.0,0.5 80.0,4.5 84.0,0.5 88.0,4.5 92.0,0.5 96.0,4.5" fill="none" stroke="#5f9e64" stroke-width="1.25"/></svg>
<div class="ln" style="left:679.6px;top:3.7px;">14</div>
<div class="code" style="left:789.6px;top:4px"><span class="k">import</span> <span class="s">&#x27;package:flutter_atomic_design/models/country.dart&#x27;</span><span class="k">;</span></div>
<div class="ln" style="left:679.6px;top:39.7px;">15</div>
<div class="ln" style="left:679.6px;top:75.7px;">16</div>
<div class="code" style="left:789.6px;top:76px"><span class="k">class</span> MainScreen <span class="k">extends</span> StatefulWidget {</div>
<div class="ln" style="left:679.6px;top:111.7px;">17</div>
<div class="code" style="left:789.6px;top:112px">  <span class="a">@</span>override</div>
<div class="ln" style="left:679.6px;top:147.7px;">18</div>
<div class="code" style="left:789.6px;top:148px">  _MainScreenState <span class="f">createState</span>() =&gt; <span class="f">_MainScreenState</span>()<span class="k">;</span></div>
<div class="ln" style="left:679.6px;top:183.7px;">19</div>
<div class="code" style="left:789.6px;top:184px">}</div>
<div class="ln" style="left:679.6px;top:219.7px;">20</div>
<div class="ln" style="left:679.6px;top:255.7px;">21</div>
<div class="code" style="left:789.6px;top:256px"><span class="k">class</span> _MainScreenState <span class="k">extends</span> State&lt;MainScreen&gt; {</div>
<div class="ln" style="left:679.6px;top:291.7px;">22</div>
<div class="code" style="left:789.6px;top:292px">  <span class="k">final</span> DbHelper <span class="p">_helper</span> = <span class="k">new</span> <span class="f">DbHelper</span>()<span class="k">;</span></div>
<div class="ln" style="left:679.6px;top:327.7px;">23</div>
<div class="ln" style="left:679.6px;top:363.7px;">24</div>
<div class="code" style="left:789.6px;top:364px">  <span class="a">@</span>override</div>
<div class="ln" style="left:679.6px;top:399.7px;">25</div>
<div class="code" style="left:789.6px;top:400px">  <span class="k">void</span> <span class="f">initState</span>() {</div>
<div class="ln" style="left:679.6px;top:435.7px;">26</div>
<div class="code" style="left:789.6px;top:436px">    <span class="k">super</span>.initState()<span class="k">;</span></div>
<div class="ln" style="left:679.6px;top:471.7px;">27</div>
<div class="code" style="left:789.6px;top:472px">    <span class="c">// _helper.openDB();</span></div>
<div class="ln" style="left:679.6px;top:507.7px;">28</div>
<div class="code" style="left:789.6px;top:508px">    <span class="c">// _helper.insert(CountryQuery.TABLE_NAME, {&quot;NAME&quot;:&quot;</span><span class="c wv">Singapura</span><span class="c">&quot;});</span></div>
<div class="ln" style="left:679.6px;top:543.7px;">29</div>
<div class="code" style="left:789.6px;top:544px">    <span class="p">_helper</span>.getData(CountryQuery.<span class="pi">TABLE_NAME</span>).then((value) {</div>
<div class="ln" style="left:679.6px;top:579.7px;">30</div>
<div class="code" style="left:789.6px;top:580px">      value.forEach((<span class="hl">element</span>) {</div>
<div class="ln" style="left:679.6px;top:615.7px;color:#a4a3a3">31</div>
<div class="code" style="left:789.6px;top:616px">        Country country = <span class="f">Country.fromJson</span><span class="br">(</span><span class="hl">element</span><span class="br">)</span><span class="k">;</span></div>
<div class="ln" style="left:679.6px;top:651.7px;">32</div>
<div class="code" style="left:789.6px;top:652px">        print(country.toJson())<span class="k">;</span></div>
<div class="ln" style="left:679.6px;top:687.7px;">33</div>
<div class="code" style="left:789.6px;top:688px">      })<span class="k">;</span></div>
<div class="ln" style="left:679.6px;top:723.7px;">34</div>
<div class="code" style="left:789.6px;top:724px">    })<span class="k">;</span></div>
<div class="ln" style="left:679.6px;top:759.7px;">35</div>
<div class="code" style="left:789.6px;top:760px">  }</div>
<div class="ln" style="left:679.6px;top:795.7px;">36</div>
<div class="ln" style="left:679.6px;top:831.7px;">37</div>
<div class="code" style="left:789.6px;top:832px">  <span class="a">@</span>override</div>
<div class="ln" style="left:679.6px;top:867.7px;">38</div>
<div class="code" style="left:789.6px;top:868px">  Widget <span class="f">build</span>(BuildContext context) {</div>
<div class="ln" style="left:679.6px;top:903.7px;">39</div>
<div class="code" style="left:789.6px;top:904px">    <span class="k">return</span> <span class="f">Scaffold</span>(</div>
<div class="ln" style="left:679.6px;top:939.7px;">40</div>
<div class="code" style="left:789.6px;top:940px">      appBar: <span class="f">AppBar</span>(</div>
<div class="ln" style="left:679.6px;top:975.7px;">41</div>
<div class="code" style="left:789.6px;top:976px">        title: <span class="f">Text</span>(<span class="s">&quot;</span><span class="s wv">SQFLITE</span><span class="s"> Demo&quot;</span>)<span class="k">,</span></div>
<div class="ln" style="left:679.6px;top:1011.7px;">42</div>
<div class="code" style="left:789.6px;top:1012px">      )<span class="k">,</span><span class="c"> // AppBar</span></div>
<div class="ln" style="left:679.6px;top:1047.7px;">43</div>
<div class="code" style="left:789.6px;top:1048px">    )<span class="k">;</span><span class="c"> // Scaffold</span></div>
<div class="ln" style="left:679.6px;top:1083.7px;">44</div>
<div class="code" style="left:789.6px;top:1084px">  }</div>
<div class="ln" style="left:679.6px;top:1119.7px;">45</div>
<div class="code" style="left:789.6px;top:1120px">}</div>
<div style="left:1391.2px;top:618.5px;width:3.2px;height:29px;background:#bbbbbb"></div>
<svg style="left:770px;top:87px;overflow:visible;" width="20" height="22" viewBox="0 0 20 22"><path d="M2.9,1.9 H17.1 V13.6 L10,20.2 L2.9,13.6 Z" fill="#2b2b2b" stroke="#555555" stroke-width="1.8"/><path d="M6.2,9 H13.8" stroke="#555555" stroke-width="1.8"/></svg>
<svg style="left:770px;top:267px;overflow:visible;" width="20" height="22" viewBox="0 0 20 22"><path d="M2.9,1.9 H17.1 V13.6 L10,20.2 L2.9,13.6 Z" fill="#2b2b2b" stroke="#555555" stroke-width="1.8"/><path d="M6.2,9 H13.8" stroke="#555555" stroke-width="1.8"/></svg>
<svg style="left:770px;top:411px;overflow:visible;" width="20" height="22" viewBox="0 0 20 22"><path d="M2.9,1.9 H17.1 V13.6 L10,20.2 L2.9,13.6 Z" fill="#2b2b2b" stroke="#555555" stroke-width="1.8"/><path d="M6.2,9 H13.8" stroke="#555555" stroke-width="1.8"/></svg>
<svg style="left:770px;top:483px;overflow:visible;" width="20" height="22" viewBox="0 0 20 22"><path d="M2.9,1.9 H17.1 V13.6 L10,20.2 L2.9,13.6 Z" fill="#2b2b2b" stroke="#555555" stroke-width="1.8"/><path d="M6.2,9 H13.8" stroke="#555555" stroke-width="1.8"/></svg>
<svg style="left:770px;top:879px;overflow:visible;" width="20" height="22" viewBox="0 0 20 22"><path d="M2.9,1.9 H17.1 V13.6 L10,20.2 L2.9,13.6 Z" fill="#2b2b2b" stroke="#555555" stroke-width="1.8"/><path d="M6.2,9 H13.8" stroke="#555555" stroke-width="1.8"/></svg>
<svg style="left:770px;top:915px;overflow:visible;" width="20" height="22" viewBox="0 0 20 22"><path d="M2.9,1.9 H17.1 V13.6 L10,20.2 L2.9,13.6 Z" fill="#2b2b2b" stroke="#555555" stroke-width="1.8"/><path d="M6.2,9 H13.8" stroke="#555555" stroke-width="1.8"/></svg>
<svg style="left:770px;top:951px;overflow:visible;" width="20" height="22" viewBox="0 0 20 22"><path d="M2.9,1.9 H17.1 V13.6 L10,20.2 L2.9,13.6 Z" fill="#2b2b2b" stroke="#555555" stroke-width="1.8"/><path d="M6.2,9 H13.8" stroke="#555555" stroke-width="1.8"/></svg>
<svg style="left:770px;top:11px;overflow:visible;" width="20" height="22" viewBox="0 0 20 22"><path d="M2.9,20.1 H17.1 V8.4 L10,1.8 L2.9,8.4 Z" fill="#2b2b2b" stroke="#555555" stroke-width="1.8"/><path d="M6.2,13.4 H13.8" stroke="#555555" stroke-width="1.8"/></svg>
<svg style="left:770px;top:191px;overflow:visible;" width="20" height="22" viewBox="0 0 20 22"><path d="M2.9,20.1 H17.1 V8.4 L10,1.8 L2.9,8.4 Z" fill="#2b2b2b" stroke="#555555" stroke-width="1.8"/><path d="M6.2,13.4 H13.8" stroke="#555555" stroke-width="1.8"/></svg>
<svg style="left:770px;top:515px;overflow:visible;" width="20" height="22" viewBox="0 0 20 22"><path d="M2.9,20.1 H17.1 V8.4 L10,1.8 L2.9,8.4 Z" fill="#2b2b2b" stroke="#555555" stroke-width="1.8"/><path d="M6.2,13.4 H13.8" stroke="#555555" stroke-width="1.8"/></svg>
<svg style="left:770px;top:767px;overflow:visible;" width="20" height="22" viewBox="0 0 20 22"><path d="M2.9,20.1 H17.1 V8.4 L10,1.8 L2.9,8.4 Z" fill="#2b2b2b" stroke="#555555" stroke-width="1.8"/><path d="M6.2,13.4 H13.8" stroke="#555555" stroke-width="1.8"/></svg>
<svg style="left:770px;top:1019px;overflow:visible;" width="20" height="22" viewBox="0 0 20 22"><path d="M2.9,20.1 H17.1 V8.4 L10,1.8 L2.9,8.4 Z" fill="#2b2b2b" stroke="#555555" stroke-width="1.8"/><path d="M6.2,13.4 H13.8" stroke="#555555" stroke-width="1.8"/></svg>
<svg style="left:770px;top:1055px;overflow:visible;" width="20" height="22" viewBox="0 0 20 22"><path d="M2.9,20.1 H17.1 V8.4 L10,1.8 L2.9,8.4 Z" fill="#2b2b2b" stroke="#555555" stroke-width="1.8"/><path d="M6.2,13.4 H13.8" stroke="#555555" stroke-width="1.8"/></svg>
<svg style="left:770px;top:1091px;overflow:visible;" width="20" height="22" viewBox="0 0 20 22"><path d="M2.9,20.1 H17.1 V8.4 L10,1.8 L2.9,8.4 Z" fill="#2b2b2b" stroke="#555555" stroke-width="1.8"/><path d="M6.2,13.4 H13.8" stroke="#555555" stroke-width="1.8"/></svg>
<svg style="left:770px;top:1127px;overflow:visible;" width="20" height="22" viewBox="0 0 20 22"><path d="M2.9,20.1 H17.1 V8.4 L10,1.8 L2.9,8.4 Z" fill="#2b2b2b" stroke="#555555" stroke-width="1.8"/><path d="M6.2,13.4 H13.8" stroke="#555555" stroke-width="1.8"/></svg>
<svg style="left:721px;top:150.3px;overflow:visible;" width="26" height="24" viewBox="0 0 26 24"><g fill="#7f8ad6"><rect x="0.8" y="8.6" width="7.4" height="1.8"/><rect x="2.6" y="12.6" width="5.6" height="1.8"/><rect x="4.6" y="16.6" width="3.6" height="1.8"/><path d="M10,9.5 L17,6 L24,9.5 V18 L17,22 L10,18 Z"/></g><path d="M12.9,7.1 L18.9,1 L24.9,7.1 L22.9,9.1 L20.4,6.6 V12.6 H17.4 V6.6 L14.9,9.1 Z" fill="#ee7676"/><path d="M14,9.6 L17.6,8.2 V11.4 Z" fill="#2b2b2b" opacity="0.75"/></svg>
<svg style="left:721px;top:402.3px;overflow:visible;" width="26" height="24" viewBox="0 0 26 24"><g fill="#7f8ad6"><rect x="0.8" y="8.6" width="7.4" height="1.8"/><rect x="2.6" y="12.6" width="5.6" height="1.8"/><rect x="4.6" y="16.6" width="3.6" height="1.8"/><path d="M10,9.5 L17,6 L24,9.5 V18 L17,22 L10,18 Z"/></g><path d="M12.9,7.1 L18.9,1 L24.9,7.1 L22.9,9.1 L20.4,6.6 V12.6 H17.4 V6.6 L14.9,9.1 Z" fill="#ee7676"/><path d="M14,9.6 L17.6,8.2 V11.4 Z" fill="#2b2b2b" opacity="0.75"/></svg>
<svg style="left:721px;top:870.3px;overflow:visible;" width="26" height="24" viewBox="0 0 26 24"><g fill="#7f8ad6"><rect x="0.8" y="8.6" width="7.4" height="1.8"/><rect x="2.6" y="12.6" width="5.6" height="1.8"/><rect x="4.6" y="16.6" width="3.6" height="1.8"/><path d="M10,9.5 L17,6 L24,9.5 V18 L17,22 L10,18 Z"/></g><path d="M12.9,7.1 L18.9,1 L24.9,7.1 L22.9,9.1 L20.4,6.6 V12.6 H17.4 V6.6 L14.9,9.1 Z" fill="#ee7676"/><path d="M14,9.6 L17.6,8.2 V11.4 Z" fill="#2b2b2b" opacity="0.75"/></svg>
</div>
<div style="left:38px;top:1206px;width:2468px;height:2px;background:#323436"></div>
<div style="left:38px;top:1208px;width:2468px;height:52px;background:#3c3f41"></div>
<div style="left:38px;top:1260px;width:2468px;height:2px;background:#323232"></div>
<div style="left:50px;top:1212px;font-size:22.5px;line-height:48px;height:48px;white-space:pre;color:#bbbbbb;font-size:22.6px">Run:</div>
<svg style="left:144.5px;top:1218.8px;overflow:visible;" width="23.8" height="30.2" viewBox="0 0 256 317"><path d="M157.67,0 L0,157.67 L48.8,206.47 L255.27,0 Z" fill="#4a9ab6"/><path d="M156.57,145.4 L72.15,229.8 L121.13,279.53 L255.27,145.4 Z" fill="#4a9ab6"/><path d="M71.6,230.36 L120.4,181.56 L169.84,230.82 L121.13,279.53 Z" fill="#387fa6"/><path d="M121.13,279.53 L158.21,316.61 L255.26,316.61 L169.84,230.82 Z" fill="#225a8a"/></svg>
<div style="left:180px;top:1212px;font-size:22.5px;line-height:48px;height:48px;white-space:pre;color:#bbbbbb;font-size:23.05px">main.dart</div>
<svg style="left:308px;top:1228px;overflow:visible;" width="16" height="16" viewBox="0 0 16 16"><path d="M1.5,1.5 L14,14 M14,1.5 L1.5,14" stroke="#9aa7b0" stroke-width="1.9" fill="none"/></svg>
<div style="left:116px;top:1256px;width:230px;height:6px;background:#747a80"></div>
<div style="left:2489.25px;top:1223.25px;width:5.5px;height:5.5px;background:#fff;border-radius:50%"></div>
<div style="left:2489.25px;top:1231.25px;width:5.5px;height:5.5px;background:#fff;border-radius:50%"></div>
<div style="left:2489.25px;top:1239.25px;width:5.5px;height:5.5px;background:#fff;border-radius:50%"></div>
<div style="left:38px;top:1262px;width:57px;height:378px;background:#3c3f41"></div>
<div style="left:94.5px;top:1262px;width:1.7px;height:378px;background:#323232"></div>
<div style="left:55px;top:1279px;width:21.8px;height:21.8px;background:#f75470"></div>
<svg style="left:56px;top:1327px;overflow:visible;" width="20" height="30" viewBox="0 0 20 30"><path d="M4.3,1.2 H16.7 V4.5 H14.5 V15 L18.4,19 V20.5 H1.9 V19 L6.5,15 V4.5 H4.3 Z" fill="#c78fe8"/><rect x="9.4" y="20.5" width="1.7" height="7.9" fill="#c78fe8"/></svg>
<div style="left:96.6px;top:1262px;width:2409.4px;height:54px;background:#3c3f41"></div>
<div style="left:96.6px;top:1316px;width:2409.4px;height:2px;background:#35373a"></div>
<svg style="left:122px;top:1277px;overflow:visible;" width="29" height="26" viewBox="0 0 29 26"><path fill-rule="evenodd" fill="#d391de" d="M3.4,0.8 H25 a2.6,2.6 0 0 1 2.6,2.6 V22.4 a2.6,2.6 0 0 1 -2.6,2.6 H3.4 a2.6,2.6 0 0 1 -2.6,-2.6 V3.4 a2.6,2.6 0 0 1 2.6,-2.6 Z M3.2,5.2 V22.4 H25.2 V5.2 Z"/><path d="M5.2,8.4 L13.6,13.6 L5.2,18.8 V15.8 L9,13.6 L5.2,11.4 Z" fill="#d391de"/><rect x="14" y="16.4" width="8.2" height="2.8" fill="#d391de"/></svg>
<div style="left:160.5px;top:1266px;font-size:22.5px;line-height:48px;height:48px;white-space:pre;color:#bbbbbb;font-size:21.95px">Console</div>
<svg style="left:0;top:0" width="0" height="0"><defs><linearGradient id="gb" x1="0" y1="0" x2="0" y2="1"><stop offset="0" stop-color="#f3a127"/><stop offset="1" stop-color="#fcc43a"/></linearGradient><linearGradient id="gg" x1="0" y1="0" x2="0" y2="1"><stop offset="0" stop-color="#1a9648"/><stop offset="1" stop-color="#2fb54c"/></linearGradient></defs></svg>
<svg style="left:281px;top:1272px;overflow:visible;" width="20" height="32" viewBox="0 0 20 32"><path d="M10.6,0.2 L1,19.7 L8.4,20.2 L9.4,31.6 L19,12.4 L11.5,12 Z" fill="url(#gb)"/></svg>
<svg style="left:329px;top:1273px;overflow:visible;" width="30" height="31" viewBox="0 0 30 31"><path d="M26.25,14.4 V7.95 a4,4 0 0 0 -4,-4 H7.15 a4,4 0 0 0 -4,4 V16.5 a4,4 0 0 0 4,4 H11.5" fill="none" stroke="url(#gg)" stroke-width="4.1"/><path d="M10.6,14.9 L16.7,20.6 L10.6,26.4 Z" fill="#2db34b"/><path d="M22.4,11.4 L17.1,23.1 L21.4,23.1 L22.1,30.3 L27.8,18.1 L23.1,18 Z" fill="url(#gb)" stroke="#3c3f41" stroke-width="0.8" paint-order="stroke"/></svg>
<div style="left:375.9px;top:1268px;width:2px;height:39.7px;background:#555555"></div>
<svg style="left:395px;top:1273px;overflow:visible;" width="30" height="30" viewBox="0 0 30 30"><path d="M16.07,1 L22.3,6.2 L28.6,12.4 V23.9 L24.3,24.6 L23.9,28.9 H12.5 L1.07,16 L5.7,6.9 Z" fill="#74b0ec"/><path d="M5.7,6.9 L22.3,6.2 L28.6,12.4 V23.9 L24.3,24.6 Z" fill="#506ea5"/><path d="M1.07,16 L5.7,6.9 L6,21.6 Z" fill="#567ebd"/></svg>
<div style="left:96.6px;top:1318px;width:55px;height:322px;background:#3c3f41"></div>
<div style="left:151.6px;top:1318px;width:2354.4px;height:322px;background:#2b2b2b"></div>
<svg style="left:112px;top:1336px;overflow:visible;" width="24" height="24" viewBox="0 0 24 24"><path d="M12,22 V3 M3,11.6 L12,2.6 L21,11.6" fill="none" stroke="#5e6264" stroke-width="2.2"/></svg>
<svg style="left:112px;top:1388px;overflow:visible;" width="24" height="24" viewBox="0 0 24 24"><path d="M12,2 V21 M3,12.4 L12,21.4 L21,12.4" fill="none" stroke="#5e6264" stroke-width="2.2"/></svg>
<div style="left:102px;top:1430px;width:44px;height:44px;background:#5a5e61;border-radius:6px"></div>
<svg style="left:111px;top:1442px;overflow:visible;" width="28" height="24" viewBox="0 0 28 24"><g fill="none" stroke="#8b9cf9" stroke-width="2.7"><path d="M0.9,2.2 H25.2"/><path d="M0.9,10.3 H20.6 a4.4,3.9 0 0 1 0,7.8 H16.5"/><path d="M0.9,18.1 H9.9"/></g><path d="M18,13.6 V22.6 L12.4,18.1 Z" fill="#8b9cf9"/></svg>
<div style="left:102px;top:1482.2px;width:44px;height:43.6px;background:#5a5e61;border-radius:6px"></div>
<svg style="left:111px;top:1491px;overflow:visible;" width="26" height="26" viewBox="0 0 26 26"><rect x="0.9" y="1" width="24.3" height="24" rx="2.4" fill="#d8cae8"/><path d="M10.6,7.8 H15.7 V12.5 H19.8 L13.2,19.3 L6.6,12.5 H10.6 Z" fill="#55585b"/></svg>
<svg style="left:110px;top:1543px;overflow:visible;" width="29" height="26" viewBox="0 0 29 26"><rect x="6.6" y="0.6" width="15.6" height="5.6" fill="#4dd0e1"/><rect x="0.6" y="7.6" width="27.6" height="13" rx="3.2" fill="#4dd0e1"/><rect x="6.6" y="14.4" width="15.6" height="10.6" fill="#4dd0e1"/><rect x="9.4" y="17" width="10" height="5.4" fill="#3c3f41"/><circle cx="24" cy="11.6" r="1.5" fill="#3c3f41"/></svg>
<svg style="left:114px;top:1595px;overflow:visible;" width="21" height="26" viewBox="0 0 21 26"><path d="M6.6,0.6 H13.4 L14.6,2 H19.6 V5 H0.6 V2 H5.6 Z" fill="#f75470"/><path d="M1.8,6.6 H18.4 V22.6 a2.6,2.6 0 0 1 -2.6,2.6 H4.4 a2.6,2.6 0 0 1 -2.6,-2.6 Z" fill="#f75470"/></svg>
<div class="con" style="left:173.6px;top:1319.5px">Performing hot restart...</div>
<div class="con" style="left:173.6px;top:1355.5px">Syncing files to device iPhone 11 Pro Max...</div>
<div class="con" style="left:173.6px;top:1391.5px">Restarted application in 1,527ms.</div>
<div class="con" style="left:173.6px;top:1427.5px">flutter: {id: 1, NAME: Indonesia}</div>
<div class="con" style="left:173.6px;top:1463.5px">flutter: {id: 2, NAME: Singapura}</div>
<div class="con" style="left:173.6px;top:1499.5px">flutter: {id: 3, NAME: Singapura}</div>
<div style="left:140.2px;top:1315px;width:778.2px;height:246px;border:4.7px solid #f9291c"></div>
</div></body></html>
